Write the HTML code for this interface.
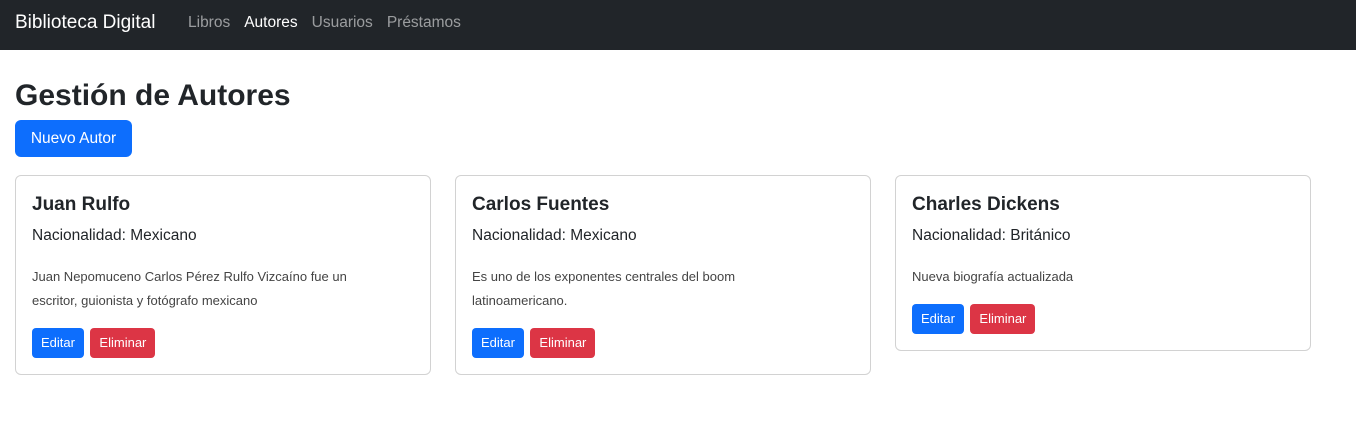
<!DOCTYPE html>
<html><head><meta charset="utf-8"><style>
*{box-sizing:border-box;margin:0;padding:0}
body{width:1356px;height:427px;background:#fff;font-family:"Liberation Sans",Arial,sans-serif;color:#212529;position:relative;overflow:hidden}
nav{position:absolute;left:0;top:0;width:1356px;height:50px;background:#212529}
.brand{position:absolute;left:15px;top:12px;font-size:19px;color:#fff;white-space:nowrap}
.links{position:absolute;left:188px;top:14px;font-size:15.5px;color:rgba(255,255,255,.55);white-space:nowrap}
.links span{margin-right:14px}
.links .act{color:#fff}
h1{position:absolute;left:15px;top:76px;font-size:30px;font-weight:bold;line-height:40px;white-space:nowrap}
.nb{position:absolute;left:15px;top:120px;width:117px;height:37px;background:#0d6efd;border-radius:6px;color:#fff;font-size:15.5px;line-height:37px;text-align:center}
.card{position:absolute;top:175px;width:416px;border:1px solid rgba(0,0,0,.175);border-radius:6px;padding:15px 16px 16px}
.t{font-size:19px;font-weight:bold;line-height:27px;margin-bottom:6px;white-space:nowrap}
.s{font-size:15.5px;line-height:24px;margin-bottom:17px;white-space:nowrap}
.p{font-size:13px;line-height:24px;color:#444;margin-bottom:15px}
.b{display:inline-block;height:30px;line-height:30px;padding:0 9px;font-size:13px;color:#fff;border-radius:4px;margin-right:2px}
.e{background:#0d6efd}.d{background:#dc3545}
</style></head><body>
<nav><div class="brand">Biblioteca Digital</div>
<div class="links"><span>Libros</span><span class="act">Autores</span><span>Usuarios</span><span>Préstamos</span></div></nav>
<h1>Gestión de Autores</h1>
<div class="nb">Nuevo Autor</div>
<div class="card" style="left:15px"><div class="t">Juan Rulfo</div><div class="s">Nacionalidad: Mexicano</div>
<div class="p">Juan Nepomuceno Carlos Pérez Rulfo Vizcaíno fue un<br>escritor, guionista y fotógrafo mexicano</div>
<span class="b e">Editar</span> <span class="b d">Eliminar</span></div>
<div class="card" style="left:455px"><div class="t">Carlos Fuentes</div><div class="s">Nacionalidad: Mexicano</div>
<div class="p">Es uno de los exponentes centrales del boom<br>latinoamericano.</div>
<span class="b e">Editar</span> <span class="b d">Eliminar</span></div>
<div class="card" style="left:895px"><div class="t">Charles Dickens</div><div class="s">Nacionalidad: Británico</div>
<div class="p">Nueva biografía actualizada</div>
<span class="b e">Editar</span> <span class="b d">Eliminar</span></div>
</body></html>
